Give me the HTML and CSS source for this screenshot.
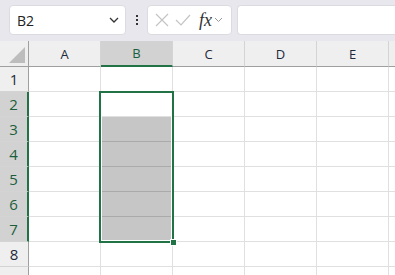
FILE: index.html
```html
<!doctype html>
<html>
<head>
<meta charset="utf-8">
<title>Tabelle</title>
<link rel="stylesheet" href="styles.css">
</head>
<body>
<div class="leiste">
	<div class="namensfeld">
		<span>B2</span>
		<svg class="pfeil" width="10" height="6" viewBox="0 0 10 6"><path d="M1 1 L5 5 L9 1" fill="none" stroke="#333" stroke-width="1.3"/></svg>
	</div>
	<div class="punkte"><i></i><i></i><i></i></div>
	<div class="knoepfe">
		<svg width="14" height="14" viewBox="0 0 14 14"><path d="M1 1 L13 13 M13 1 L1 13" stroke="#c4c4c4" stroke-width="1.2"/></svg>
		<svg width="16" height="14" viewBox="0 0 16 14"><path d="M1 7 L6 12 L15 2" fill="none" stroke="#c4c4c4" stroke-width="1.2"/></svg>
		<span class="fx">fx</span>
		<svg width="9" height="6" viewBox="0 0 9 6"><path d="M1 1 L4.5 4.5 L8 1" fill="none" stroke="#999" stroke-width="1"/></svg>
	</div>
	<div class="formel"></div>
</div>

<div class="blatt">
	<div class="tabelle">
		<div class="kopf ecke"><i></i></div>
		<div class="kopf">A</div>
		<div class="kopf aktiv">B</div>
		<div class="kopf">C</div>
		<div class="kopf">D</div>
		<div class="kopf">E</div>
		<div class="kopf"></div>

		<div class="nr">1</div><div class="z"></div><div class="z"></div><div class="z"></div><div class="z"></div><div class="z"></div><div class="z"></div>
		<div class="nr aktiv">2</div><div class="z"></div><div class="z"></div><div class="z"></div><div class="z"></div><div class="z"></div><div class="z"></div>
		<div class="nr aktiv">3</div><div class="z"></div><div class="z markiert"></div><div class="z"></div><div class="z"></div><div class="z"></div><div class="z"></div>
		<div class="nr aktiv">4</div><div class="z"></div><div class="z markiert"></div><div class="z"></div><div class="z"></div><div class="z"></div><div class="z"></div>
		<div class="nr aktiv">5</div><div class="z"></div><div class="z markiert"></div><div class="z"></div><div class="z"></div><div class="z"></div><div class="z"></div>
		<div class="nr aktiv">6</div><div class="z"></div><div class="z markiert"></div><div class="z"></div><div class="z"></div><div class="z"></div><div class="z"></div>
		<div class="nr aktiv">7</div><div class="z"></div><div class="z markiert"></div><div class="z"></div><div class="z"></div><div class="z"></div><div class="z"></div>
		<div class="nr">8</div><div class="z"></div><div class="z"></div><div class="z"></div><div class="z"></div><div class="z"></div><div class="z"></div>
		<div class="nr">9</div><div class="z"></div><div class="z"></div><div class="z"></div><div class="z"></div><div class="z"></div><div class="z"></div>
	</div>
	<!-- Auswahlrahmen B2:B7 -->
	<div class="auswahl"><i class="griff"></i></div>
</div>
</body>
</html>
```

FILE: styles.css
```css
* {margin:0; padding:0; box-sizing:border-box; }
body {width:395px; height:275px; overflow:hidden; background:#fff; font-family:"Open Sans","Noto Sans",Arial,sans-serif; color:#222; }

.leiste {display:flex; align-items:center; height:41px; padding:0 0 1px 9px; background:#e9e7ee; }
.namensfeld {display:flex; align-items:center; justify-content:space-between; width:117px; height:30px; padding:0 6px 0 7px; background:#fff; border:1px solid #dcdbe0; border-radius:4px; font-size:14px; }
.namensfeld span {color:#222; }
.punkte {display:flex; flex-direction:column; gap:2px; width:21px; align-items:center; }
.punkte i {display:block; width:2px; height:2px; background:#333; }
.knoepfe {display:flex; align-items:center; gap:6px; width:85px; height:30px; padding:0 6px 0 7px; background:#fff; border:1px solid #dcdbe0; border-radius:4px; }
.fx {font:italic 18px "Liberation Serif","DejaVu Serif",serif; color:#333; margin-left:2px; margin-right:-4px; }
.formel {flex:1; height:30px; margin-left:5px; background:#fff; border:1px solid #dcdbe0; border-right:none; border-radius:4px 0 0 4px; }

.blatt {position:relative; }
.tabelle {display:grid; grid-template-columns:29px repeat(5,72px) 40px; grid-template-rows:26px repeat(9,25px); }
.kopf {display:flex; align-items:center; justify-content:center; background:#efefef; border-right:1px solid #d4d4d4; border-bottom:1px solid #9f9f9f; font-size:13px; color:#1e2a3a; }
.kopf.aktiv {background:#d2d2d2; border-bottom:2px solid #217346; color:#1b5e3c; }
.ecke {position:relative; border-right:1px solid #9f9f9f; }
.ecke i {position:absolute; right:3px; bottom:3px; width:0; height:0; border-left:16px solid transparent; border-bottom:16px solid #bdbdbd; }
.nr {display:flex; align-items:center; justify-content:center; background:#efefef; border-right:1px solid #9f9f9f; border-bottom:1px solid #d4d4d4; font-size:15px; color:#1e2a3a; }
.nr.aktiv {background:#d2d2d2; border-right:2px solid #217346; color:#1b5e3c; }
.z {border-right:1px solid #e0e0e0; border-bottom:1px solid #e0e0e0; }
.z.markiert {background:#c6c6c6; border-bottom-color:#aaaaaa; }

.auswahl {position:absolute; left:99px; top:50px; width:75px; height:152px; border:2px solid #217346; box-shadow:inset 0 0 0 1px #fff; }
.griff {position:absolute; right:-5px; bottom:-5px; width:7px; height:7px; background:#217346; border:1px solid #fff; }
```
